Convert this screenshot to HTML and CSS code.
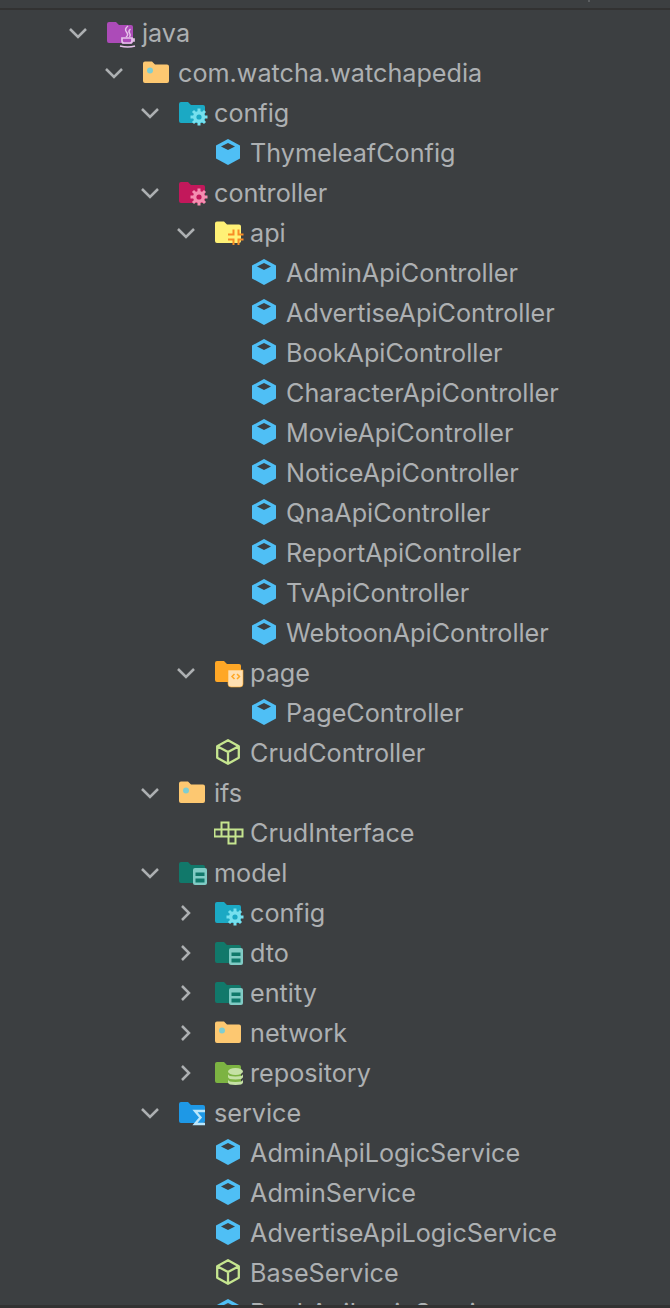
FILE: index.html
```html
<!DOCTYPE html>
<html lang="en">
<head>
<meta charset="utf-8">
<title>Project tree</title>
<link rel="stylesheet" href="styles.css">
</head>
<body>
<svg class="defs" width="0" height="0">
  <symbol id="open" viewBox="0 0 20 12"><path d="M2 2l8 8 8-8" fill="none" stroke="#adb0b2" stroke-width="2.500"/></symbol>
  <symbol id="shut" viewBox="0 0 12 20"><path d="M2 3l7 7-7 7" fill="none" stroke="#adb0b2" stroke-width="2.500"/></symbol>
  <symbol id="cls" viewBox="0 0 32 32"><path d="M14 2l12 6.500v13L14 28 2 21.500v-13z" fill="#4fbff5"/><path d="M14 6l7 3.500-7 3.500-7-3.500z" fill="#3c3f41"/></symbol>
  <symbol id="abs" viewBox="0 0 32 32"><path d="M14 3.200l10.800 6v11.600L14 26.800 3.200 20.800V9.200zM3.200 9.200L14 15l10.800-5.800M14 15v11.800" fill="none" stroke="#c5e58f" stroke-width="2.300" stroke-linejoin="round"/></symbol>
  <symbol id="ifc" viewBox="0 0 32 32"><path d="M7.500 5.500h7v7h-7zM.5 12.500h7v7h-7zM7.500 12.500h7v7h-7zM14.500 12.500h7v7h-7zM21.500 12.500h7v7h-7zM14.500 19.500h7v7h-7z" fill="none" stroke="#c5e58f" stroke-width="2"/></symbol>
  <symbol id="plain" viewBox="0 0 32 32"><path d="M1 6.500a2 2 0 0 1 2-2h7l3 3h12a2 2 0 0 1 2 2V24a2 2 0 0 1-2 2H3a2 2 0 0 1-2-2z" fill="#fdc871"/><circle cx="8" cy="13.500" r="3" fill="#7fcdd0"/></symbol>
  <symbol id="java" viewBox="0 0 32 32"><path d="M1 7a2 2 0 0 1 2-2h7l3 3h12a2 2 0 0 1 2 2v14a2 2 0 0 1-2 2H3a2 2 0 0 1-2-2z" fill="#ac4bb8"/><path d="M15 20h12v4q0 3-3 3h-6q-3 0-3-3z" fill="#ac4bb8"/><path d="M16 21h10v3q0 2-2 2h-6q-2 0-2-2zM26 22h2v2h-2M14 29q8 2 15 0" fill="none" stroke="#e6c3ea" stroke-width="1.700"/><path d="M22 9q-4 3-1.500 6t-.5 5M24.500 12q-2.500 2-1 4t0 4" fill="none" stroke="#e6c3ea" stroke-width="1.500"/></symbol>
  <symbol id="conf" viewBox="0 0 32 32"><path d="M1 7a2 2 0 0 1 2-2h7l3 3h12a2 2 0 0 1 2 2v14a2 2 0 0 1-2 2H3a2 2 0 0 1-2-2z" fill="#1ba9c4"/><path d="M21 11.500v17M12.500 20h17M15 14l12 12M27 14L15 26" stroke="#76e0ee" stroke-width="3"/><circle cx="21" cy="20" r="6" fill="#76e0ee"/><circle cx="21" cy="20" r="2.600" fill="#1ba9c4"/></symbol>
  <symbol id="ctrl" viewBox="0 0 32 32"><path d="M1 7a2 2 0 0 1 2-2h7l3 3h12a2 2 0 0 1 2 2v14a2 2 0 0 1-2 2H3a2 2 0 0 1-2-2z" fill="#c2185b"/><path d="M21 11.500v17M12.500 20h17M15 14l12 12M27 14L15 26" stroke="#f48fb1" stroke-width="3"/><circle cx="21" cy="20" r="6" fill="#f48fb1"/><circle cx="21" cy="20" r="2.600" fill="#c2185b"/></symbol>
  <symbol id="api" viewBox="0 0 32 32"><path d="M1 6.500a2 2 0 0 1 2-2h7l3 3h12a2 2 0 0 1 2 2V24a2 2 0 0 1-2 2H3a2 2 0 0 1-2-2z" fill="#fff176"/><path d="M14 17.500h5.500V12.500M24.500 12.500v5H29.500M14 22.500h5.500v5.500M24.500 28v-5.500H29.500" fill="none" stroke="#f88c25" stroke-width="2"/></symbol>
  <symbol id="page" viewBox="0 0 32 32"><path d="M1 6a2 2 0 0 1 2-2h7l3 3h12a2 2 0 0 1 2 2v14a2 2 0 0 1-2 2H3a2 2 0 0 1-2-2z" fill="#ffa726"/><path d="M14 13h15v14q0 3-3 3h-9q-3 0-3-3z" fill="#ffe0b2" stroke="#ffa726" stroke-width=".6"/><path d="M20.500 17l-2.500 2.500 2.500 2.500M23 17l2.500 2.500-2.500 2.500" fill="none" stroke="#ffa726" stroke-width="1.500"/></symbol>
  <symbol id="data" viewBox="0 0 32 32"><path d="M1 7a2 2 0 0 1 2-2h7l3 3h12a2 2 0 0 1 2 2v14a2 2 0 0 1-2 2H3a2 2 0 0 1-2-2z" fill="#11786a"/><rect x="15" y="11" width="14" height="17" rx="2" fill="#80cbc4"/><path d="M17.500 15.500h9v3.500h-9zM17.500 21.500h9v4h-9z" fill="#11786a"/></symbol>
  <symbol id="repo" viewBox="0 0 32 32"><path d="M1 7a2 2 0 0 1 2-2h7l3 3h12a2 2 0 0 1 2 2v14a2 2 0 0 1-2 2H3a2 2 0 0 1-2-2z" fill="#7cb342"/><ellipse cx="21.500" cy="14.500" rx="7.500" ry="3.500" fill="#c5e1a5"/><path d="M14 17q0 2.500 7.500 2.500T29 17v3q0 2.500-7.500 2.500T14 20zM14 22.500q0 2.500 7.500 2.500t7.500-2.500v3q0 2.500-7.500 2.500T14 25.500z" fill="#c5e1a5"/></symbol>
  <symbol id="serv" viewBox="0 0 32 32"><path d="M1 7a2 2 0 0 1 2-2h7l3 3h12a2 2 0 0 1 2 2v14a2 2 0 0 1-2 2H3a2 2 0 0 1-2-2z" fill="#1e98e6"/><path d="M27 14H17l5.500 6.500L17 27h10" fill="none" stroke="#bbe6fb" stroke-width="2.400"/></symbol>
</svg>

<div class="marker"></div>
<div class="tree">
  <div class="row d0"><svg class="arrow"><use href="#open"/></svg><svg class="ico"><use href="#java"/></svg><span>java</span></div>
  <div class="row d1"><svg class="arrow"><use href="#open"/></svg><svg class="ico"><use href="#plain"/></svg><span>com.watcha.watchapedia</span></div>
  <div class="row d2"><svg class="arrow"><use href="#open"/></svg><svg class="ico"><use href="#conf"/></svg><span>config</span></div>
  <div class="row d3 leaf"><svg class="ico"><use href="#cls"/></svg><span>ThymeleafConfig</span></div>
  <div class="row d2"><svg class="arrow"><use href="#open"/></svg><svg class="ico"><use href="#ctrl"/></svg><span>controller</span></div>
  <div class="row d3"><svg class="arrow"><use href="#open"/></svg><svg class="ico"><use href="#api"/></svg><span>api</span></div>
  <div class="row d4 leaf"><svg class="ico"><use href="#cls"/></svg><span>AdminApiController</span></div>
  <div class="row d4 leaf"><svg class="ico"><use href="#cls"/></svg><span>AdvertiseApiController</span></div>
  <div class="row d4 leaf"><svg class="ico"><use href="#cls"/></svg><span>BookApiController</span></div>
  <div class="row d4 leaf"><svg class="ico"><use href="#cls"/></svg><span>CharacterApiController</span></div>
  <div class="row d4 leaf"><svg class="ico"><use href="#cls"/></svg><span>MovieApiController</span></div>
  <div class="row d4 leaf"><svg class="ico"><use href="#cls"/></svg><span>NoticeApiController</span></div>
  <div class="row d4 leaf"><svg class="ico"><use href="#cls"/></svg><span>QnaApiController</span></div>
  <div class="row d4 leaf"><svg class="ico"><use href="#cls"/></svg><span>ReportApiController</span></div>
  <div class="row d4 leaf"><svg class="ico"><use href="#cls"/></svg><span>TvApiController</span></div>
  <div class="row d4 leaf"><svg class="ico"><use href="#cls"/></svg><span>WebtoonApiController</span></div>
  <div class="row d3"><svg class="arrow"><use href="#open"/></svg><svg class="ico"><use href="#page"/></svg><span>page</span></div>
  <div class="row d4 leaf"><svg class="ico"><use href="#cls"/></svg><span>PageController</span></div>
  <div class="row d3 leaf"><svg class="ico"><use href="#abs"/></svg><span>CrudController</span></div>
  <div class="row d2"><svg class="arrow"><use href="#open"/></svg><svg class="ico"><use href="#plain"/></svg><span>ifs</span></div>
  <div class="row d3 leaf"><svg class="ico"><use href="#ifc"/></svg><span>CrudInterface</span></div>
  <div class="row d2"><svg class="arrow"><use href="#open"/></svg><svg class="ico"><use href="#data"/></svg><span>model</span></div>
  <div class="row d3"><svg class="arrow closed"><use href="#shut"/></svg><svg class="ico"><use href="#conf"/></svg><span>config</span></div>
  <div class="row d3"><svg class="arrow closed"><use href="#shut"/></svg><svg class="ico"><use href="#data"/></svg><span>dto</span></div>
  <div class="row d3"><svg class="arrow closed"><use href="#shut"/></svg><svg class="ico"><use href="#data"/></svg><span>entity</span></div>
  <div class="row d3"><svg class="arrow closed"><use href="#shut"/></svg><svg class="ico"><use href="#plain"/></svg><span>network</span></div>
  <div class="row d3"><svg class="arrow closed"><use href="#shut"/></svg><svg class="ico"><use href="#repo"/></svg><span>repository</span></div>
  <div class="row d2"><svg class="arrow"><use href="#open"/></svg><svg class="ico"><use href="#serv"/></svg><span>service</span></div>
  <div class="row d3 leaf"><svg class="ico"><use href="#cls"/></svg><span>AdminApiLogicService</span></div>
  <div class="row d3 leaf"><svg class="ico"><use href="#cls"/></svg><span>AdminService</span></div>
  <div class="row d3 leaf"><svg class="ico"><use href="#cls"/></svg><span>AdvertiseApiLogicService</span></div>
  <div class="row d3 leaf"><svg class="ico"><use href="#abs"/></svg><span>BaseService</span></div>
  <div class="row d3 leaf"><svg class="ico"><use href="#cls"/></svg><span>BookApiLogicService</span></div>
</div>
</body>
</html>
```

FILE: styles.css
```css
html, body { margin: 0; height: 100%; overflow: hidden; }
body { background: #3c3f41; color: #adb0b2; font-family: Inter, "Liberation Sans", sans-serif; font-size: 25.2px; }
.defs { position: absolute; }
.marker { position: absolute; left: 588px; top: 0; width: 2px; height: 2px; background: #5a5d5f; }

.tree { border-top: 2px solid #323232; border-bottom: 3px solid #323232; margin-top: 8px; padding-top: 3px; height: 1300px; box-sizing: border-box; overflow: hidden; }
.row { display: flex; align-items: center; height: 40px; white-space: nowrap; }
.d0 { padding-left: 68px; }
.d1 { padding-left: 104px; }
.d2 { padding-left: 140px; }
.d3 { padding-left: 176px; }
.d4 { padding-left: 212px; }
.leaf { margin-left: 38px; }

.arrow { width: 20px; height: 12px; margin-right: 18px; flex: none; }
.arrow.closed { width: 12px; height: 20px; margin-left: 4px; margin-right: 22px; }
.ico { width: 32px; height: 32px; margin-right: 4px; flex: none; }
```
